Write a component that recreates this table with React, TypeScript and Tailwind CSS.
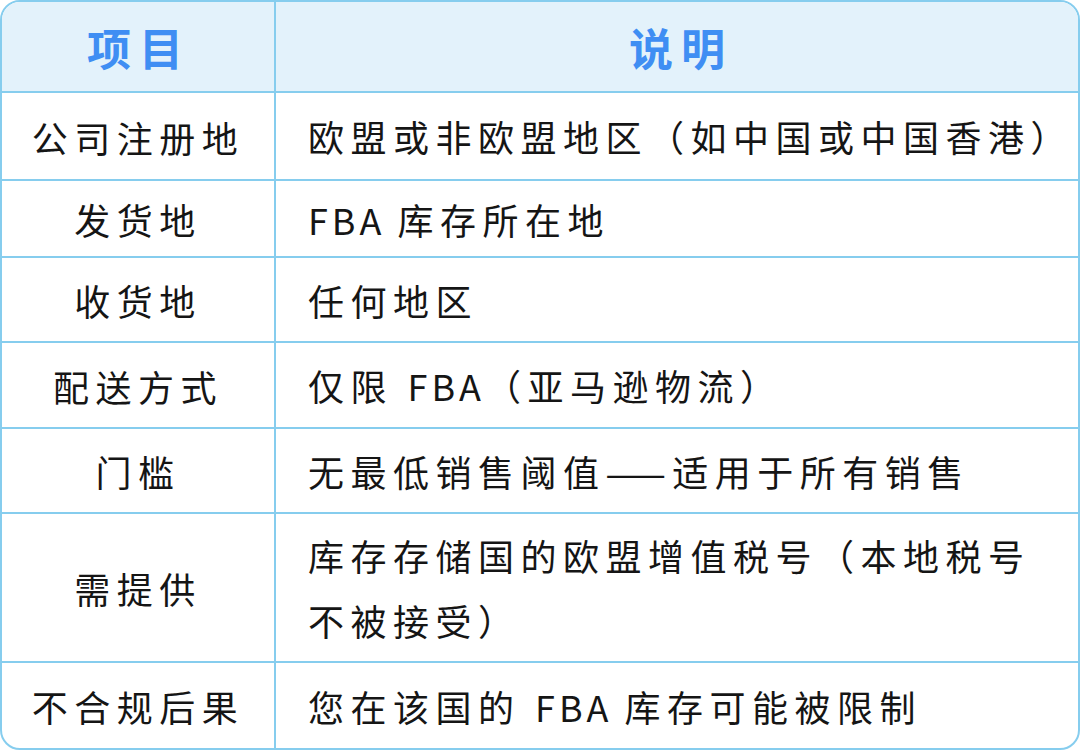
import React from "react"

type Row = { label: string; desc: React.ReactNode; h: string }

const Fba = () => <span className="tracking-[4px]">FBA </span>

const rows: Row[] = [
  { label: "公司注册地", desc: "欧盟或非欧盟地区（如中国或中国香港）", h: "h-[88px]" },
  { label: "发货地", desc: <><Fba />库存所在地</>, h: "h-[77px]" },
  { label: "收货地", desc: "任何地区", h: "h-[85px]" },
  { label: "配送方式", desc: <>仅限 <span className="tracking-[4px]">FBA</span>（亚马逊物流）</>, h: "h-[86px]" },
  { label: "门槛", desc: "无最低销售阈值——适用于所有销售", h: "h-[85px]" },
  {
    label: "需提供",
    desc: (
      <>
        库存存储国的欧盟增值税号（本地税号
        <br />
        不被接受）
      </>
    ),
    h: "h-[149px]",
  },
  { label: "不合规后果", desc: <>您在该国的 <Fba />库存可能被限制</>, h: "h-[85px]" },
]

export default function App() {
  return (
    <div className="w-[1080px] h-[750px] bg-white font-['Noto_Sans_CJK_SC','Noto_Sans',sans-serif]">
      <div className="h-full border-2 border-[#86cdee] rounded-[20px] overflow-hidden flex flex-col">
        {/* header */}
        <div className="flex h-[91px] bg-[#e3f2fb] border-b-2 border-[#86cdee] text-[#3f8ef3] text-[44px] font-bold tracking-[8px]">
          <div className="w-[274px] border-r-2 border-[#86cdee] flex items-center justify-center pl-[2px]">项目</div>
          <div className="flex-1 flex items-center justify-center pl-[8px]">说明</div>
        </div>

        {/* body rows */}
        {rows.map((r, i) => (
          <div
            key={r.label}
            className={`flex ${r.h} text-[36px] text-[#151515] tracking-[6.5px] ${
              i < rows.length - 1 ? "border-b-2 border-[#86cdee]" : ""
            }`}
          >
            <div className="w-[274px] shrink-0 border-r-2 border-[#86cdee] flex items-center justify-center pt-[1px] whitespace-nowrap">
              {r.label}
            </div>
            <div className="flex-1 flex items-center pl-[32px] pt-[1px] whitespace-nowrap leading-[65px]">
              <div>{r.desc}</div>
            </div>
          </div>
        ))}
      </div>
    </div>
  )
}
